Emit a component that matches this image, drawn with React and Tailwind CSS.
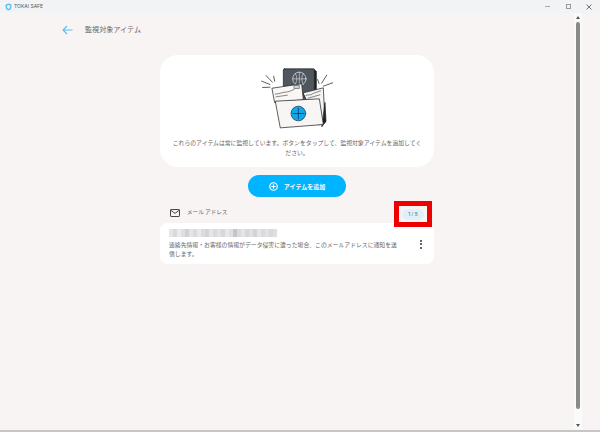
const jp = { fontFamily: '"Noto Sans CJK JP", "Noto Sans", sans-serif' };
const mosaic = ["#e6e6e8","#d8d9dc","#ebebec","#dedee1","#d0d1d5","#e4e4e6","#dadbde","#e9e9ea","#dcdcdf","#d3d4d7","#e6e6e8","#d9dadc","#e2e2e4","#d6d7da","#e8e8e9","#dedfe2","#c4c5ca","#dadade","#e4e4e6","#d6d7da","#e0e0e2","#d2d3d6","#e5e5e7","#dadbdd","#e2e2e4","#d8d9db","#dedfe1"];

function Illustration() {
  return (
    <svg width="120" height="67" viewBox="0 20 360 200" fill="none" stroke="#222" strokeWidth="2.2" strokeLinecap="round" strokeLinejoin="round">
      <rect x="130" y="28" width="94" height="104" rx="4" fill="#50565e" />
      <path d="M224 32l5 3v92l-5 5z" fill="#222" />
      <circle cx="178" cy="58" r="20" stroke="#dfe2e5" fill="none" />
      <path d="M158 58h40M178 38v40M166 42c6 10 6 22 0 32M190 42c-6 10-6 22 0 32" stroke="#dfe2e5" strokeWidth="1.8" />
      <path d="M65 65l25 10M78 48l19 20M101 50l3 15M68 84l22-1" />
      <path d="M233 60l4 12M260 47l-15 24M278 70l-28 10" />
      <path d="M190 100l60-15 5 105-20 6z" fill="#f6f4f2" />
      <path d="M198 108c8-4 12 0 18-4s10-4 26-10M204 116l36-10" strokeWidth="1.6" />
      <path d="M255 130l3 55-12 16z" fill="#222" />
      <path d="M97 86l88-13 5 48-85 8z" fill="#f8f7f5" />
      <rect x="163" y="78" width="15" height="9" fill="#cdd2d6" strokeWidth="1.4" />
      <path d="M106 104c14-1 18-5 30-6s14-3 26-8M108 112l34-5" strokeWidth="1.6" />
      <path d="M107 125l131-7 12 77-128 10z" fill="#f8f6f4" />
      <circle cx="175" cy="162" r="22" fill="#12a7ea" stroke="#173a4c" />
      <path d="M175 146v32M159 162h32" stroke="#0f3850" strokeWidth="2.4" />
    </svg>
  );
}

export default function App() {
  return (
    <div className="relative w-[600px] h-[432px] flex flex-col overflow-hidden bg-[#f8f4f3] border-b-2 border-[#c4c6c8]" style={jp}>
      <header className="h-[13px] bg-[#f1f3f5] flex items-center shrink-0">
        <svg className="ml-[5px]" width="7" height="8" viewBox="0 0 24 26">
          <path d="M12 1l10 3v9c0 6-4 10-10 12C6 23 2 19 2 13V4z" fill="#5fbcee" />
          <path d="M12 6l5 2v5c0 3-2 5-5 7-3-2-5-4-5-7V8z" fill="#e8f5fc" />
        </svg>
        <span className="ml-[2px] text-[5px] leading-none text-[#555]" style={{ fontFamily: '"Inter", sans-serif' }}>TOKAI SAFE</span>
        <div className="ml-auto flex items-center gap-[15.5px] pr-[8px]">
          <div className="w-[5px] h-px bg-[#aaa]" />
          <div className="w-[5px] h-[5px] border border-[#999]" />
          <svg width="6" height="6" viewBox="0 0 6 6" stroke="#666" strokeWidth="0.9"><path d="M0.5 0.5l5 5M5.5 0.5l-5 5" /></svg>
        </div>
      </header>

      <div className="flex-1 flex min-h-0">
        <main className="flex-1 min-w-0 flex flex-col">
          <div className="h-[34px] flex items-center pl-[62px] shrink-0">
            <svg width="11" height="10" viewBox="0 0 11 10" fill="none" stroke="#5cbcf4" strokeWidth="1.1"><path d="M10.5 5H1M5 1L1 5l4 4" /></svg>
            <span className="ml-[12px] text-[7.1px] leading-none text-[#666]">監視対象アイテム</span>
          </div>

          <div className="w-[274px] ml-[160px] mt-[8px] flex flex-col">
            <section className="h-[112px] bg-white rounded-[18px] flex flex-col items-center">
              <div className="mt-[11px] ml-[6px] h-[67px]"><Illustration /></div>
              <p className="mt-[5px] px-[10px] text-center text-[5.85px] leading-[10px] text-[#666] w-full">これらのアイテムは常に監視しています。ボタンをタップして、監視対象アイテムを追加してください。</p>
            </section>

            <button className="self-center mt-[8px] w-[98px] h-[22px] rounded-full bg-[#00b4ff] flex items-center justify-center gap-[6px] text-white text-[6px] font-bold">
              <svg width="9" height="9" viewBox="0 0 10 10" fill="none" stroke="white" strokeWidth="1.3"><circle cx="5" cy="5" r="4.2" /><path d="M5 2.6v4.8M2.6 5h4.8" /></svg>
              アイテムを追加
            </button>

            <div className="relative z-10 mt-[7px] h-[18.5px] flex items-center">
              <svg className="ml-[10px]" width="10" height="8" viewBox="0 0 10 8" fill="none" stroke="#333" strokeWidth="0.9"><rect x="0.5" y="0.5" width="9" height="7" rx="0.6" /><path d="M0.7 1.2L5 4.4l4.3-3.2" /></svg>
              <span className="ml-[7px] text-[5.6px] leading-none text-[#666]">メール アドレス</span>
              <div className="absolute right-[2px] top-[-3px] w-[38px] h-[26px] border-[5px] border-[#ee0000] flex items-center justify-center">
                <span className="w-[22px] h-[11px] rounded-full bg-[#dff0fc] text-[5px] leading-[11px] text-center text-[#666]" style={{ fontFamily: '"Inter", sans-serif' }}>1 / 5</span>
              </div>
            </div>

            <section className="relative h-[41px] bg-white rounded-[8px] flex">
              <div className="pl-[9px] pt-[6px] w-[241px]">
                <div className="flex w-[108px] h-[8px]">
                  {mosaic.map((c, i) => <div key={i} className="flex-1" style={{ backgroundColor: c }} />)}
                </div>
                <p className="mt-[3px] text-[5.85px] leading-[9.5px] text-[#666]">連絡先情報・お客様の情報がデータ侵害に遭った場合、このメールアドレスに通知を送信します。</p>
              </div>
              <div className="absolute right-[12px] top-[17px] flex flex-col gap-[1.5px]">
                <div className="w-[2px] h-[2px] rounded-full bg-[#333]" />
                <div className="w-[2px] h-[2px] rounded-full bg-[#333]" />
                <div className="w-[2px] h-[2px] rounded-full bg-[#333]" />
              </div>
            </section>
          </div>
        </main>

        <aside className="w-[26px] shrink-0 pr-[18px] flex">
          <div className="w-[8px] bg-[#fbfafa] flex flex-col items-center pt-[3px] pb-[2px] mb-[1px]">
            <div className="w-0 h-0 border-x-[2px] border-x-transparent border-b-[3px] border-b-[#555]" />
            <div className="w-[4px] h-[387px] mt-[3px] bg-[#8a8a8a] rounded-full" />
            <div className="mt-auto w-0 h-0 border-x-[2px] border-x-transparent border-t-[3px] border-t-[#555]" />
          </div>
        </aside>
      </div>
    </div>
  );
}
